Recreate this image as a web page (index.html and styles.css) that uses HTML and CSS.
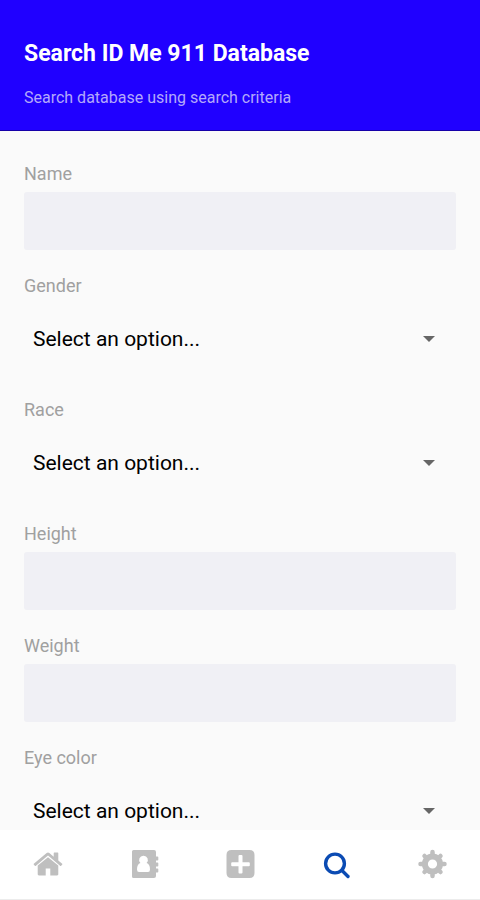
FILE: index.html
```html
<!DOCTYPE html>
<html lang="en">
<head>
  <meta charset="utf-8">
  <meta name="viewport" content="width=device-width, initial-scale=1">
  <title>Search ID Me 911 Database</title>
  <link rel="stylesheet" href="styles.css">
</head>
<body>
  <header class="header">
    <h1 class="title">Search ID Me 911 Database</h1>
    <p class="subtitle">Search database using search criteria</p>
  </header>

  <main class="content">
    <form class="form">
      <div class="field">
        <label class="label" for="name">Name</label>
        <input class="input" id="name" type="text">
      </div>
      <div class="field">
        <label class="label" for="gender">Gender</label>
        <div class="picker">
          <select class="select" id="gender"><option>Select an option...</option></select>
        </div>
      </div>
      <div class="field">
        <label class="label" for="race">Race</label>
        <div class="picker">
          <select class="select" id="race"><option>Select an option...</option></select>
        </div>
      </div>
      <div class="field">
        <label class="label" for="height">Height</label>
        <input class="input" id="height" type="text">
      </div>
      <div class="field">
        <label class="label" for="weight">Weight</label>
        <input class="input" id="weight" type="text">
      </div>
      <div class="field">
        <label class="label" for="eyes">Eye color</label>
        <div class="picker">
          <select class="select" id="eyes"><option>Select an option...</option></select>
        </div>
      </div>
    </form>
  </main>

  <nav class="tabs">
    <a class="tab" href="#home" aria-label="Home">
      <svg class="icon" viewBox="0 0 1792 1792"><path d="M1472 992v480q0 26-19 45t-45 19h-384v-384h-256v384h-384q-26 0-45-19t-19-45v-480q0-1 .5-3t.5-3l575-474 575 474q1 2 1 6zm223-69l-62 74q-8 9-21 11h-3q-13 0-21-7l-692-577-692 577q-12 8-24 7-13-2-21-11l-62-74q-8-10-7-23.5t11-21.5l719-599q32-26 76-26t76 26l244 204v-195q0-14 9-23t23-9h192q14 0 23 9t9 23v408l219 182q10 8 11 21.5t-7 23.5z"/></svg>
    </a>
    <a class="tab" href="#contacts" aria-label="Contacts">
      <svg class="icon" viewBox="0 0 32 32"><path fill-rule="evenodd" d="M5.500 2H26Q28 2 28 4V8.500H29.500Q30.300 8.500 30.300 9.300V11.700Q30.300 12.500 29.500 12.500H28V14.500H29.500Q30.300 14.500 30.300 15.300V17.700Q30.300 18.500 29.500 18.500H28V20.500H29.500Q30.300 20.500 30.300 21.300V23.700Q30.300 24.500 29.500 24.500H28V28Q28 30 26 30H5.500Q4 30 4 28.500V3.500Q4 2 5.500 2ZM15.500 7.800A4.200 4.200 0 0 0 12.400 15Q9 16 9 21.500Q9 24 11 24H20Q22 24 22 21.500Q22 16 18.600 15A4.200 4.200 0 0 0 15.500 7.800Z"/></svg>
    </a>
    <a class="tab" href="#add" aria-label="Add">
      <svg class="icon" viewBox="0 0 32 32"><path fill-rule="evenodd" d="M7.500 2H25.500Q30.500 2 30.500 7V25Q30.500 30 25.500 30H7.500Q2.500 30 2.500 25V7Q2.500 2 7.500 2ZM15.500 7Q14.500 7 14.500 8V14.200H8.200Q7.200 14.200 7.200 15.200V17.200Q7.200 18.200 8.200 18.200H14.500V24.500Q14.500 25.500 15.500 25.500H17.500Q18.500 25.500 18.500 24.500V18.200H24.800Q25.800 18.200 25.800 17.200V15.200Q25.800 14.200 24.800 14.200H18.500V8Q18.500 7 17.500 7Z"/></svg>
    </a>
    <a class="tab tab-active" href="#search" aria-label="Search" aria-current="page">
      <svg class="icon icon-line" viewBox="0 0 32 32"><circle cx="15" cy="15.500" r="9.400"/><path d="M22 22.500L28 28.500"/></svg>
    </a>
    <a class="tab" href="#settings" aria-label="Settings">
      <svg class="icon icon-gear" viewBox="0 0 32 32">
        <circle class="gear-ring" cx="16.500" cy="16" r="7.600"/>
        <path class="gear-teeth" d="M16.500 7V4M16.500 25V28M7.500 16H4.500M25.500 16H28.500M10.500 10L8.500 8M22.500 10L24.500 8M10.500 22L8.500 24M22.500 22L24.500 24"/>
      </svg>
    </a>
  </nav>
</body>
</html>
```
FILE: styles.css
```css
* {
  box-sizing: border-box;
}

body {
  margin: 0;
  height: 100vh;
  display: flex;
  flex-direction: column;
  background: #fafafa;
  font-family: Roboto, "Liberation Sans", sans-serif;
}

.header {
  flex: none;
  display: flex;
  flex-direction: column;
  gap: 16px;
  padding: 38px 24px 20px;
  background: #2000ff;
  border-bottom: 1px solid #1600a8;
}

.title {
  margin: 0;
  color: #fff;
  font-size: 23px;
  line-height: 32px;
  font-weight: 700;
}

.subtitle {
  margin: 0;
  color: #b3a8fb;
  font-size: 16px;
  line-height: 24px;
}

.content {
  flex: 1;
  min-height: 0;
  overflow-y: auto;
  scrollbar-width: none;
  padding: 31px 24px;
}

.form {
  display: flex;
  flex-direction: column;
  gap: 24px;
}

.field {
  display: flex;
  flex-direction: column;
  gap: 6px;
}

.label {
  color: #a0a0a0;
  font-size: 18px;
  line-height: 24px;
}

.input {
  width: 100%;
  height: 58px;
  padding: 0 12px;
  border: 0;
  border-radius: 3px;
  background: #f0f0f5;
  color: #000;
  font: inherit;
  font-size: 21px;
}

.picker {
  display: grid;
  align-items: center;
}

.picker::after {
  content: "";
  grid-area: 1 / 1;
  justify-self: end;
  margin-right: 21px;
  border: 6px solid transparent;
  border-top-color: #666;
  border-bottom: 0;
  pointer-events: none;
}

.select {
  grid-area: 1 / 1;
  appearance: none;
  width: 100%;
  height: 70px;
  padding: 0 48px 0 9px;
  border: 0;
  background: transparent;
  color: #000;
  font: inherit;
  font-size: 21px;
}

.tabs {
  flex: none;
  display: grid;
  grid-template-columns: repeat(5, 1fr);
  height: 70px;
  padding-bottom: 1px;
  background: #fff;
  border-bottom: 1px solid #ececec;
}

.tab {
  display: flex;
  align-items: center;
  justify-content: center;
  color: #bfbfbf;
}

.tab-active {
  color: #0b4bb3;
}

.icon {
  width: 32px;
  height: 32px;
  fill: currentColor;
}

.icon-line {
  fill: none;
  stroke: currentColor;
  stroke-width: 3.400;
  stroke-linecap: round;
}

.icon-gear {
  fill: none;
  stroke: currentColor;
  stroke-linecap: round;
}

.gear-ring {
  stroke-width: 6;
}

.gear-teeth {
  stroke-width: 4.500;
}
```
